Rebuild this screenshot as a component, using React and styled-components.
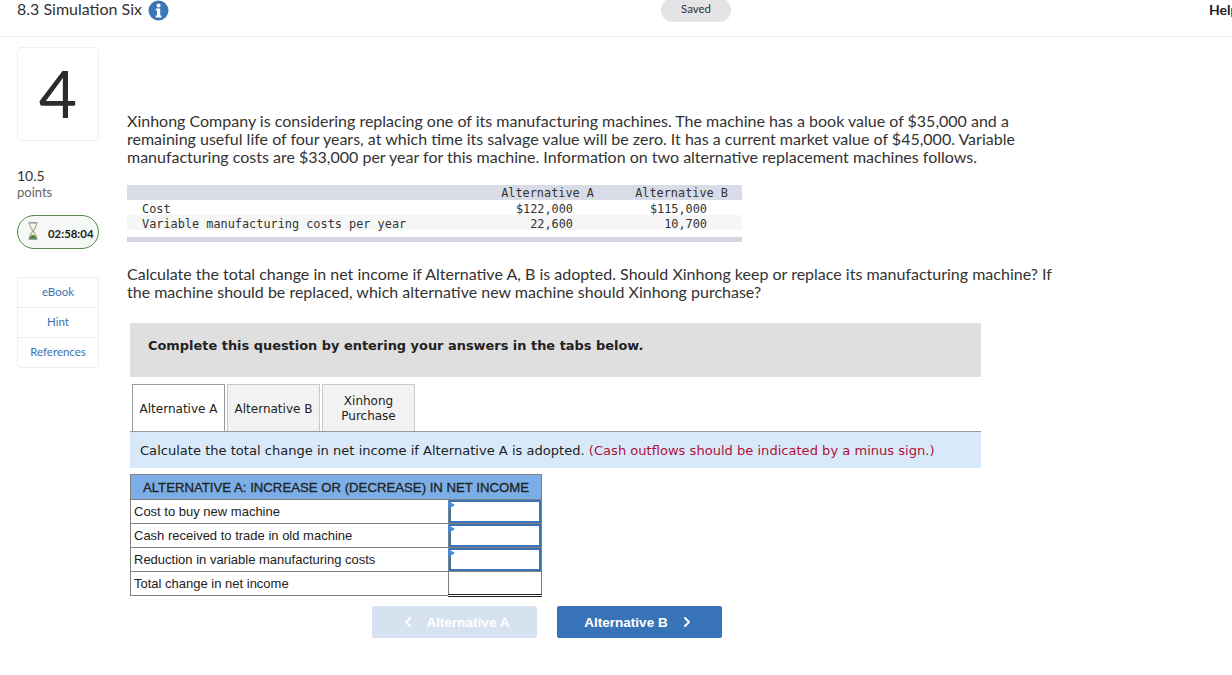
import React from "react";
import styled, { createGlobalStyle } from "styled-components";
import { ChevronLeft, ChevronRight } from "lucide-react";

const GlobalStyle = createGlobalStyle`
  html, body {
    margin: 0;
    padding: 0;
    background: #fff;
    overflow: hidden;
    font-family: "Lato", "Liberation Sans", sans-serif;
    color: #2d2d2d;
  }
  * { box-sizing: border-box; }
`;

const COST_ROWS = [
  { label: "Cost", a: "$122,000", b: "$115,000" },
  { label: "Variable manufacturing costs per year", a: "22,600", b: "10,700", shaded: true },
];

const ANSWER_ROWS = [
  "Cost to buy new machine",
  "Cash received to trade in old machine",
  "Reduction in variable manufacturing costs",
];

function InfoIcon() {
  return (
    <svg width="21" height="21" viewBox="0 0 21 21">
      <circle cx="10.5" cy="10.5" r="10" fill="#3b76b8" />
      <circle cx="10.6" cy="5.4" r="2" fill="#fff" />
      <path d="M7.8 8.6h4.4v7h1.3v1.8H7.7v-1.8H9v-5.2H7.8z" fill="#fff" />
    </svg>
  );
}

function HourglassIcon() {
  return (
    <Glass width="12" height="18" viewBox="0 0 13 20">
      <path d="M1.5 1h10M1.5 19h10" stroke="#7f8a90" strokeWidth="1.6" fill="none" />
      <path d="M2.5 1.5c0 5 3.5 6 3.5 8.5s-3.5 3.5-3.5 8.5M10.5 1.5c0 5-3.5 6-3.5 8.5s3.5 3.5 3.5 8.5" stroke="#b3a67e" strokeWidth="1.3" fill="none" />
      <path d="M2.5 18.5c.4-2.6 2.6-3.8 4-4.2 1.4.4 3.6 1.6 4 4.2z" fill="#4c7f3c" />
    </Glass>
  );
}

export default function App() {
  return (
    <>
      <GlobalStyle />
      <Header>
        <TitleGroup>
          <AssignmentTitle>8.3 Simulation Six</AssignmentTitle>
          <InfoIcon />
        </TitleGroup>
        <SavedPill>Saved</SavedPill>
        <HelpLink>Help</HelpLink>
      </Header>
      <Body>
        <Sidebar>
          <QuestionNumber>4</QuestionNumber>
          <Points>10.5</Points>
          <PointsLabel>points</PointsLabel>
          <Timer>
            <HourglassIcon />
            <TimerText>02:58:04</TimerText>
          </Timer>
          <ResourceList>
            <ResourceItem>eBook</ResourceItem>
            <ResourceItem>Hint</ResourceItem>
            <ResourceItem>References</ResourceItem>
          </ResourceList>
        </Sidebar>
        <Main>
          <Paragraph>
            Xinhong Company is considering replacing one of its manufacturing machines. The machine has a book value of $35,000 and a remaining useful life of four years, at which time its salvage value will be zero. It has a current market value of $45,000. Variable manufacturing costs are $33,000 per year for this machine. Information on two alternative replacement machines follows.
          </Paragraph>
          <CostTable>
            <CostHead>
              <CostLabel />
              <CostValue>Alternative A</CostValue>
              <CostValue>Alternative B</CostValue>
            </CostHead>
            {COST_ROWS.map((row) => (
              <CostRow key={row.label} $shaded={row.shaded}>
                <CostLabel>{row.label}</CostLabel>
                <CostAmount>{row.a}</CostAmount>
                <CostAmount>{row.b}</CostAmount>
              </CostRow>
            ))}
            <CostFoot />
          </CostTable>
          <Paragraph>
            Calculate the total change in net income if Alternative A, B is adopted. Should Xinhong keep or replace its manufacturing machine? If the machine should be replaced, which alternative new machine should Xinhong purchase?
          </Paragraph>
          <Workspace>
            <Instructions>Complete this question by entering your answers in the tabs below.</Instructions>
            <Tabs>
              <Tab $active>Alternative A</Tab>
              <Tab>Alternative B</Tab>
              <Tab>Xinhong<br />Purchase</Tab>
            </Tabs>
            <Banner>
              Calculate the total change in net income if Alternative A is adopted. <Hint>(Cash outflows should be indicated by a minus sign.)</Hint>
            </Banner>
            <AnswerTable>
              <colgroup>
                <LabelCol />
                <ValueCol />
              </colgroup>
              <thead>
                <tr>
                  <HeadCell colSpan={2}>ALTERNATIVE A: INCREASE OR (DECREASE) IN NET INCOME</HeadCell>
                </tr>
              </thead>
              <tbody>
                {ANSWER_ROWS.map((label) => (
                  <tr key={label}>
                    <LabelCell>{label}</LabelCell>
                    <InputCell><AnswerInput /></InputCell>
                  </tr>
                ))}
                <tr>
                  <LabelCell>Total change in net income</LabelCell>
                  <TotalCell />
                </tr>
              </tbody>
            </AnswerTable>
            <ButtonRow>
              <NavButton disabled>
                <ChevronLeft size={16} strokeWidth={3} />
                Alternative A
              </NavButton>
              <NavButton>
                Alternative B
                <ChevronRight size={16} strokeWidth={3} />
              </NavButton>
            </ButtonRow>
          </Workspace>
        </Main>
      </Body>
    </>
  );
}

const Header = styled.header`
  position: relative;
  height: 37px;
  background: #fff;
  border-bottom: 1px solid #eee;
  display: flex;
  padding-left: 17px;
  overflow: hidden;
`;

const TitleGroup = styled.div`
  display: flex;
  align-items: flex-start;
  gap: 6px;
  height: 21px;
`;

const AssignmentTitle = styled.div`
  font-size: 16px;
  line-height: 18px;
  color: #333;
`;

const SavedPill = styled.div`
  position: absolute;
  left: 661px;
  top: -2px;
  width: 70px;
  height: 24px;
  border-radius: 12px;
  background: #e4e3e6;
  font-size: 11.5px;
  line-height: 22px;
  text-align: center;
  color: #333;
`;

const HelpLink = styled.div`
  position: absolute;
  left: 1209px;
  top: 1px;
  font-size: 14px;
  font-weight: 700;
  color: #222;
`;

const Body = styled.div`
  display: flex;
`;

const Sidebar = styled.aside`
  width: 127px;
  flex: none;
  padding: 10px 0 0 17px;
`;

const QuestionNumber = styled.div`
  width: 82px;
  height: 94px;
  border: 1px solid #efefef;
  border-radius: 5px;
  font-size: 66px;
  line-height: 90px;
  text-align: center;
  color: #2b2b2b;
`;

const Points = styled.div`
  margin-top: 26px;
  font-size: 14px;
  line-height: 17px;
  color: #333;
`;

const PointsLabel = styled.div`
  font-size: 13px;
  line-height: 16px;
  color: #666;
`;

const Timer = styled.div`
  margin-top: 15px;
  width: 82px;
  height: 34px;
  border: 1px solid #4f8a45;
  border-radius: 17px;
  background: #f5f8f4;
  display: flex;
  align-items: center;
  gap: 9px;
  padding-left: 9px;
  font-size: 11.4px;
  font-weight: 700;
  color: #222;
`;

const Glass = styled.svg`
  margin-top: -3px;
`;

const TimerText = styled.span`
  padding-top: 2px;
`;

const ResourceList = styled.div`
  margin-top: 28px;
  width: 82px;
  border: 1px solid #eee;
  border-radius: 0 0 4px 4px;
`;

const ResourceItem = styled.div`
  height: 30px;
  border-bottom: 1px solid #eee;
  font-size: 11.5px;
  line-height: 28px;
  text-align: center;
  color: #3d72b4;

  &:last-child {
    border-bottom: none;
    height: 29px;
  }
`;

const Main = styled.main`
  width: 930px;
  padding-top: 75px;
`;

const Paragraph = styled.p`
  margin: 0;
  font-size: 16px;
  line-height: 18px;
  color: #333;
`;

const CostTable = styled.div`
  margin: 19px 0 23px;
  width: 615px;
  font-family: "DejaVu Sans Mono", "Liberation Mono", monospace;
  font-size: 11.87px;
  color: #333;
`;

const CostRow = styled.div`
  display: grid;
  grid-template-columns: 333px 134px 134px;
  height: 15px;
  line-height: 19px;
  background: ${(p) => (p.$shaded ? "#f6f6f6" : "#fff")};
`;

const CostHead = styled(CostRow)`
  line-height: 17px;
  background: #d8dce6;
`;

const CostFoot = styled.div`
  height: 5px;
  margin-top: 7px;
  background: #d1d5e0;
`;

const CostLabel = styled.div`
  padding-left: 15px;
  white-space: pre;
`;

const CostValue = styled.div`
  text-align: right;
  white-space: pre;
`;

const CostAmount = styled.div`
  text-align: right;
  white-space: pre;
  padding-right: 21px;
`;

const Workspace = styled.div`
  margin: 22px 0 0 3px;
  width: 851px;
`;

const Instructions = styled.div`
  height: 54px;
  padding-left: 18px;
  background: #dfdfdf;
  font-family: "DejaVu Sans", "Liberation Sans", sans-serif;
  font-size: 12.93px;
  font-weight: 700;
  line-height: 45px;
  color: #222;
`;

const Tabs = styled.div`
  display: flex;
  gap: 2px;
  margin: 7px 0 0 2px;
  height: 47px;
`;

const Tab = styled.div`
  position: relative;
  width: 93px;
  padding: 2px 4px 0;
  display: flex;
  align-items: center;
  justify-content: center;
  text-align: center;
  font-family: "DejaVu Sans", "Liberation Sans", sans-serif;
  font-size: 12px;
  line-height: 15px;
  color: #222;
  background: ${(p) => (p.$active ? "#fff" : "#f2f2f2")};
  border: 1px solid ${(p) => (p.$active ? "#999" : "#c8c8c8")};
  border-bottom: none;
`;

const Banner = styled.div`
  height: 37px;
  padding-left: 10px;
  background: #d8eaf9;
  border-top: 1px solid #999;
  font-family: "DejaVu Sans", "Liberation Sans", sans-serif;
  font-size: 13.07px;
  line-height: 37px;
  color: #222;
`;

const Hint = styled.span`
  color: #b0103a;
`;

const AnswerTable = styled.table`
  margin-top: 6px;
  width: 412px;
  table-layout: fixed;
  border-collapse: collapse;
  font-family: "Liberation Sans", Arial, sans-serif;
  font-size: 13px;
  color: #222;
`;

const LabelCol = styled.col`
  width: 318px;
`;

const ValueCol = styled.col`
  width: 93px;
`;

const HeadCell = styled.th`
  height: 25px;
  padding: 0;
  background: #7baee6;
  border: 1px solid #808080;
  font-size: 13.2px;
  font-weight: 400;
  -webkit-text-stroke: 0.3px #222;
  text-align: center;
`;

const LabelCell = styled.td`
  height: 24px;
  padding: 0 3px;
  border: 1px solid #808080;
  white-space: nowrap;
`;

const InputCell = styled.td`
  height: 24px;
  padding: 0;
  border: 1px solid #808080;
  position: relative;

  &::before {
    content: "";
    position: absolute;
    z-index: 1;
    top: 1px;
    left: -1px;
    border-left: 7px solid #4a8bd0;
    border-top: 4px solid transparent;
    border-bottom: 4px solid transparent;
  }
`;

const AnswerInput = styled.div`
  height: 23px;
  border: 2px solid #3b74b4;
`;

const TotalCell = styled.td`
  height: 24px;
  padding: 0;
  border: 1px solid #808080;
  border-top: 1px solid #222;
  border-bottom: 3px double #222;
`;

const ButtonRow = styled.div`
  display: flex;
  gap: 20px;
  margin: 9px 0 0 242px;
`;

const NavButton = styled.button`
  width: 165px;
  height: 32px;
  padding: 0;
  border: none;
  border-radius: 2px;
  display: flex;
  align-items: center;
  justify-content: center;
  gap: 11px;
  background: ${(p) => (p.disabled ? "#d7e2f1" : "#3873b8")};
  color: #fff;
  font-family: "Liberation Sans", Arial, sans-serif;
  font-size: 13.5px;
  font-weight: 700;
`;
